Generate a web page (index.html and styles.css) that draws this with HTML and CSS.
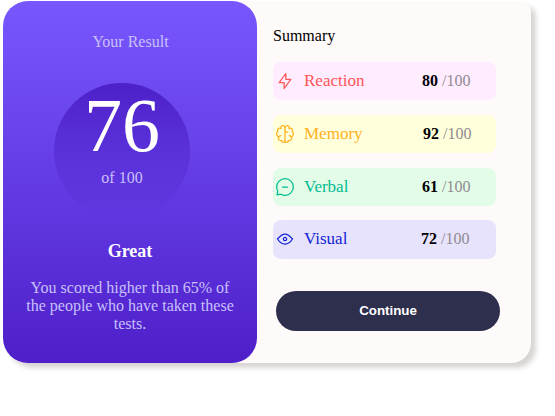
FILE: index.html
```
<!DOCTYPE html>
<html lang="en">
<head>
<meta charset="utf-8">
<title>Results summary</title>
<link rel="stylesheet" href="styles.css">
</head>
<body>
<main class="card">
  <section class="result">
    <p class="result-title">Your Result</p>
    <div class="circle">
      <span class="score">76</span>
      <span class="of">of 100</span>
    </div>
    <h1 class="grade">Great</h1>
    <p class="message">You scored higher than 65% of the people who have taken these tests.</p>
  </section>
  <section class="summary">
    <h2 class="summary-title">Summary</h2>
    <ul class="list">
      <li class="row reaction">
        <svg class="icon" viewBox="0 0 20 20"><path d="M10.833 8.333V2.5l-6.666 9.167h5V17.5l6.666-9.167h-5Z"/></svg>
        <span class="name">Reaction</span>
        <span class="value"><b>80</b> /100</span>
      </li>
      <li class="row memory">
        <svg class="icon" viewBox="0 0 20 20"><path d="M5.833 11.667a2.5 2.5 0 1 0 .834 4.858"/><path d="M3.553 13.004a3.333 3.333 0 0 1-.728-5.53m.025-.067a2.083 2.083 0 0 1 2.983-2.824m.199.054A2.083 2.083 0 1 1 10 3.75v12.917a1.667 1.667 0 0 1-3.333 0M10 5.833a2.5 2.5 0 0 0 2.5 2.5m1.667 3.334a2.5 2.5 0 1 1-.834 4.858"/><path d="M16.447 13.004a3.334 3.334 0 0 0 .728-5.53m-.025-.067a2.083 2.083 0 0 0-2.983-2.824M10 3.75a2.085 2.085 0 0 1 2.538-2.033 2.084 2.084 0 0 1 1.43 2.92m-.635 12.03a1.667 1.667 0 0 1-3.333 0"/></svg>
        <span class="name">Memory</span>
        <span class="value"><b>92</b> /100</span>
      </li>
      <li class="row verbal">
        <svg class="icon" viewBox="0 0 20 20"><path d="M7.5 10h5M10 18.333A8.333 8.333 0 1 0 1.667 10c0 1.518.406 2.942 1.115 4.167l-.699 3.75 3.75-.699A8.295 8.295 0 0 0 10 18.333Z"/></svg>
        <span class="name">Verbal</span>
        <span class="value"><b>61</b> /100</span>
      </li>
      <li class="row visual">
        <svg class="icon" viewBox="0 0 20 20"><path d="M10 11.667a1.667 1.667 0 1 0 0-3.334 1.667 1.667 0 0 0 0 3.334Z"/><path d="M17.5 10c-1.574 2.492-4.402 5-7.5 5s-5.926-2.508-7.5-5C4.416 7.632 6.66 5 10 5s5.584 2.632 7.5 5Z"/></svg>
        <span class="name">Visual</span>
        <span class="value"><b>72</b> /100</span>
      </li>
    </ul>
    <button class="continue" type="button">Continue</button>
  </section>
</main>
</body>
</html>
```
FILE: styles.css
```
* {
  box-sizing: border-box;
  margin: 0;
  padding: 0;
}

body {
  min-height: 100vh;
  padding: 1px 0 0 3px;
  background: #fff;
  font: 16px/18px "Liberation Serif", "Times New Roman", serif;
}

.card {
  display: flex;
  width: 528px;
  height: 362px;
  background: snow;
  border-radius: 25px 10px 20px 25px;
  box-shadow: 5px 5px 5px #dad5d5;
}

.result {
  width: 254px;
  padding-top: 32px;
  border-radius: 25px;
  background: linear-gradient(#7857ff, #4e1fc9);
  color: #c8c0fa;
  text-align: center;
}

.result-title {
  padding-left: 1px;
}

.circle {
  display: flex;
  flex-direction: column;
  align-items: center;
  width: 136px;
  height: 136px;
  margin: 32px 0 0 51px;
  border-radius: 50%;
  background: linear-gradient(#4d20c9, #5f37e000);
}

.score {
  height: 86px;
  color: #fff;
  font-size: 76px;
  line-height: 84px;
}

.grade {
  margin-top: 22px;
  color: #fff;
  font-size: 18px;
  line-height: 20px;
}

.message {
  width: 214px;
  margin: 18px 0 0 20px;
}

.summary {
  padding: 26px 0 0 16px;
}

.summary-title {
  font-size: 16px;
  font-weight: normal;
}

.list {
  display: grid;
  grid-template-rows: repeat(4, 38px);
  row-gap: 15px;
  width: 223px;
  margin-top: 17px;
  list-style: none;
}

.row {
  display: flex;
  align-items: center;
  padding-left: 2px;
  border-radius: 8px;
}

.icon {
  width: 20px;
  height: 20px;
  fill: none;
  stroke: currentColor;
  stroke-width: 1.25;
  stroke-linecap: round;
  stroke-linejoin: round;
}

.name {
  width: 118px;
  margin-left: 9px;
  font-size: 17px;
}

.value {
  color: #8f8b8f;
}

.value b {
  color: #000;
}

.reaction { background: #ffecff; color: #f55; }
.memory { background: #ffffdb; color: #ffb21e; }
.memory .name { width: 119px; }
.verbal { background: #e3fce7; color: #00bd91; }
.visual { margin-top: -1px; padding-bottom: 1px; background: #e8e3fc; color: #1125d6; }
.visual .name { width: 117px; }

.continue {
  display: block;
  width: 224px;
  height: 40px;
  margin: 32px 0 0 3px;
  padding-bottom: 1px;
  border: 0;
  border-radius: 20px;
  background: #2e2e4d;
  color: #fff;
  font: bold 13.33px "Liberation Sans", Arial, sans-serif;
}
```
